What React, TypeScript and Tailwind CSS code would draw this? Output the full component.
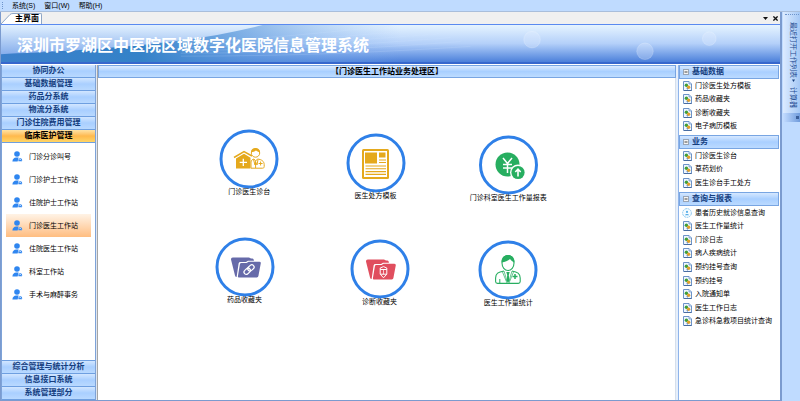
import type { ReactNode } from "react";

const topModules = ["协同办公", "基础数据管理", "药品分系统", "物流分系统", "门诊住院费用管理", "临床医护管理"];
const bottomModules = ["综合管理与统计分析", "信息接口系统", "系统管理部分"];
const stations = ["门诊分诊叫号", "门诊护士工作站", "住院护士工作站", "门诊医生工作站", "住院医生工作站", "科室工作站", "手术与麻醉事务"];

const groups = [
  { title: "基础数据", height: "h-[54px]", items: ["门诊医生处方模板", "药品收藏夹", "诊断收藏夹", "电子病历模板"] },
  { title: "业务", height: "h-[41px]", items: ["门诊医生诊台", "草药划价", "医生诊台手工处方"] },
  {
    title: "查询与报表",
    height: "h-[122px]",
    items: ["患者历史就诊信息查询", "医生工作量统计", "门诊日志", "病人疾病统计", "预约挂号查询", "预约挂号", "入院通知单", "医生工作日志", "急诊科急救项目统计查询"],
  },
];

function PersonIcon() {
  return (
    <svg className="size-[11px] shrink-0" viewBox="0 0 11 11" aria-hidden="true">
      <circle cx="5" cy="3" r="2.8" fill="#2f86f0" />
      <path d="M0.4 10.4C0.5 7.9 2 6.6 4.2 6.4L6.6 6.6 5.6 10.4Z" fill="#2f86f0" />
      <path d="M6.4 10.2C5.9 8.6 7 7 8.4 7.2 9.8 7.3 10.6 8.8 10 10.2Z" fill="#2f86f0" />
      <path d="M7.2 9.2L8.2 8.2 9.3 9.2" stroke="#fff" strokeWidth="0.7" fill="none" />
    </svg>
  );
}

function PageIcon() {
  return (
    <svg className="h-[10px] w-[9px] shrink-0" viewBox="0 0 9 10" aria-hidden="true">
      <path d="M0.5 0.5H6L8.5 3V9.5H0.5Z" fill="#eef6ff" stroke="#6c93c8" />
      <path d="M6 0.5V3H8.5" fill="#c5dbf5" stroke="#6c93c8" strokeWidth="0.7" />
      <circle cx="3.4" cy="4.2" r="1.7" fill="#3f9d3a" />
      <circle cx="5.6" cy="6.3" r="1.7" fill="#e0a02a" />
      <path d="M3.6 7.4L5 8.2" stroke="#3567b5" strokeWidth="0.9" />
      <path d="M1 9.5H8.6" stroke="#44689c" strokeWidth="0.9" />
    </svg>
  );
}

function HistoryIcon() {
  return (
    <svg className="size-[10px] shrink-0" viewBox="0 0 10 10" aria-hidden="true">
      <circle cx="5" cy="5" r="4.4" fill="#f4fbff" stroke="#7cc0ee" strokeWidth="0.8" strokeDasharray="2 0.6" />
      <circle cx="5" cy="3.9" r="1.1" fill="#58aee8" />
      <path d="M3 7.3C3.2 5.6 6.8 5.6 7 7.3Z" fill="#58aee8" />
    </svg>
  );
}

const clinic = (
  <>
    <path d="M15 28.5L25 22.5 33 27" fill="none" stroke="#e5a91d" strokeWidth="1.5" />
    <path d="M17 29.5L25 24.8 31.5 28.8V39.5H17Z" fill="#e5a91d" />
    <path d="M24.3 29.8V37M20.7 33.4H28" stroke="#fff" strokeWidth="1.3" />
    <circle cx="36.5" cy="24" r="4.2" fill="#fff" stroke="#e5a91d" />
    <path d="M32 23.5C31.5 17.5 41.5 17.5 41 23.5 39 23 38 22 37 21.5 35.5 22.5 34 23 32 23.5Z" fill="#e5a91d" />
    <path d="M32 39.2V33C32.3 31 33.5 30.4 35 30L36.6 32 38.5 30C42.5 30.5 45 32 45.2 35.5V37.5C45.2 38.8 44.5 39.2 43.5 39.2Z" fill="#fff" stroke="#e5a91d" />
    <path d="M34.5 30.5L36 36 36.6 33 38 36 39 30.5M36.6 32V39M41.6 32.5V36.5M39.6 34.5H43.6" stroke="#e5a91d" fill="none" />
  </>
);

const newspaper = (
  <>
    <rect x="16" y="16" width="27" height="30" rx="1.5" fill="#e5a91d" />
    <rect x="18" y="18" width="23" height="26" fill="#fff" />
    <rect x="19" y="19.5" width="12" height="11" fill="#e5a91d" />
    <rect x="33" y="19.5" width="6.5" height="5" fill="#e5a91d" />
    <path d="M33 27H40M33 29.5H40M19.5 33H40M19.5 35.8H40M19.5 38.6H40M19.5 41.4H40" stroke="#e5a91d" strokeWidth="1.1" />
  </>
);

const money = (
  <>
    <circle cx="29" cy="29.5" r="12" fill="#27ae60" />
    <path d="M24.5 23L29 28.5 33.5 23M29 28.5V38M24.5 29.5H33.5M24.5 33H33.5" stroke="#fff" strokeWidth="1.5" fill="none" />
    <circle cx="39.5" cy="37.5" r="8" fill="#fff" />
    <circle cx="39.5" cy="37.5" r="6.6" fill="#27ae60" />
    <path d="M39.5 41.5V34.5M36.8 37L39.5 34.2 42.2 37" stroke="#fff" strokeWidth="1.6" fill="none" />
  </>
);

const folderShape = (color: string) => (
  <>
    <path d="M16 22.5Q15.8 20.5 17.8 20.5H34L36 21.5H37.5Q38.6 21.6 38.8 23L39 23.8H33L31 25H25.5Q23.8 25 23.6 26.4L21.6 40Q20.4 40 20 38.5Z" fill={color} />
    <path d="M24.9 27.2Q25.1 26 26.4 26H31.6L33.6 24.8H44.4Q46 24.8 45.8 26.3L43.4 39Q43.2 40.4 41.8 40.4H23.8Q22.8 40.4 22.9 39.2Z" fill={color} />
  </>
);

const linkFolder = (
  <>
    {folderShape("#666aa9")}
    <g transform="rotate(-42 34 32.5)" fill="none" stroke="#fff" strokeWidth="1.2">
      <rect x="28" y="30.3" width="7" height="4.6" rx="2.3" />
      <rect x="33" y="30.3" width="7" height="4.6" rx="2.3" />
    </g>
  </>
);

const penFolder = (
  <>
    {folderShape("#e04e5e")}
    <path d="M30.2 29L33.5 27.6 36.8 29V35.2L33.5 38.8 30.2 35.2ZM30.2 30.5H36.8M30.5 35.2H36.5" fill="none" stroke="#fff" />
    <path d="M33.5 30.5V35" stroke="#fff" strokeWidth="0.7" />
  </>
);

const doctor = (
  <>
    <ellipse cx="30" cy="23" rx="6" ry="7.5" fill="#fff" stroke="#27ae60" strokeWidth="1.1" />
    <path d="M23.6 22.5C22.5 12.5 37.5 12.5 36.4 22.5 34.5 21.5 33 20.5 32 19 30 21 27 22 23.6 22.5Z" fill="#27ae60" />
    <path d="M26 31C20 32 17.8 33.5 17.6 38V41.5Q17.6 43.4 19.5 43.4H40.3Q42.2 43.4 42.2 41.5V38C42 33.5 39.5 32 34 31" fill="none" stroke="#27ae60" strokeWidth="1.1" />
    <path d="M26 31L29 41 30 36 31 41 34 31M24.5 32L29 43M35.5 32L31 43" fill="none" stroke="#27ae60" strokeWidth="0.7" />
    <path d="M28.3 32H31.7L30.8 35 31.2 41 30 43 28.8 41 29.2 35Z" fill="#27ae60" />
    <path d="M37 34V39M34.5 36.5H39.5" stroke="#27ae60" strokeWidth="1.5" />
    <path d="M21.8 39V43" stroke="#27ae60" />
  </>
);

const shortcuts: { label: string; left: number; top: number; art: ReactNode }[] = [
  { label: "门诊医生诊台", left: 26.2, top: 51, art: clinic },
  { label: "医生处方模板", left: 48.1, top: 55, art: newspaper },
  { label: "门诊科室医生工作量报表", left: 71.1, top: 57, art: money },
  { label: "药品收藏夹", left: 25.4, top: 159, art: linkFolder },
  { label: "诊断收藏夹", left: 48.8, top: 161, art: penFolder },
  { label: "医生工作量统计", left: 71.1, top: 162, art: doctor },
];

function ModuleButton({ label, active = false }: { label: string; active?: boolean }) {
  const tone = active
    ? "from-[#ffe3a4] via-[#ffb94c] to-[#ffd566] text-black"
    : "from-[#d2e6ff] via-[#a9cfff] to-[#b9d9ff] text-[#153e7e]";
  return (
    <button className={`block h-[13px] w-full border-b border-[#6e9fe0] bg-linear-to-b text-center text-[8px] leading-[12px] font-bold ${tone}`}>
      {label}
    </button>
  );
}

function Banner() {
  return (
    <header className="relative h-[40px] overflow-hidden border-t border-b-2 border-t-[#5a8af0] border-b-[#3767cd] bg-linear-to-b from-[#e6f4ff] via-[#b4d0f9] to-[#4c80da]">
      <svg className="absolute inset-0 h-full w-full" viewBox="0 0 780 38" preserveAspectRatio="none" aria-hidden="true">
        <defs>
          <linearGradient id="wave" x1="0" x2="1" y1="0" y2="0">
            <stop offset="0" stopColor="#3b80cb" />
            <stop offset="0.35" stopColor="#3482c8" />
            <stop offset="0.62" stopColor="#5b98dc" stopOpacity="0.65" />
            <stop offset="1" stopColor="#86b4ef" stopOpacity="0" />
          </linearGradient>
          <linearGradient id="sky" x1="0" x2="0" y1="0" y2="1">
            <stop offset="0" stopColor="#e2f1ff" />
            <stop offset="1" stopColor="#86aeec" />
          </linearGradient>
        </defs>
        <path d="M0 0H262C210 14 150 20 90 25 50 28 20 29 0 30Z" fill="url(#sky)" />
        <path d="M262 0C210 14 150 20 90 25 50 28 20 29 0 30V38H400V0Z" fill="url(#wave)" />
        <g fill="none" stroke="#d5e8ff" strokeOpacity="0.28" strokeWidth="0.6">
          <path d="M180 17C240 17 320 8 390 1" />
          <path d="M180 20C250 20 340 12 420 5" />
          <path d="M180 23C260 23 350 16 440 9" />
          <path d="M180 26C270 26 360 20 450 13" />
          <path d="M180 29C280 29 370 24 460 17" />
          <path d="M180 32C290 32 380 28 470 22" />
        </g>
      </svg>
      <svg className="absolute inset-y-0 right-0 h-full w-[270px]" viewBox="0 0 270 38" aria-hidden="true">
        <g fill="#e4f0ff" fillOpacity="0.3" stroke="#fff" strokeOpacity="0.2">
          <circle cx="19" cy="15" r="8.5" />
          <circle cx="135" cy="27" r="8.5" />
          <circle cx="201" cy="14" r="7" />
        </g>
      </svg>
      <h1 className="relative pl-[16px] text-[16px] leading-[42px] font-bold whitespace-nowrap text-white">
        深圳市罗湖区中医院区域数字化医院信息管理系统
      </h1>
    </header>
  );
}

export default function App() {
  return (
    <div className="flex min-h-screen flex-col bg-[#bfdbff] font-['Liberation_Sans','Noto_Sans_CJK_SC',sans-serif] text-[7px] leading-[8px] text-black">
      <nav className="flex h-[12px] items-center gap-[9px] border-b border-[#a9bedb] pl-[2px]">
        <span className="h-[7px] border-l border-dotted border-[#6d94cc]" />
        <button>系统(S)</button>
        <button>窗口(W)</button>
        <button>帮助(H)</button>
      </nav>

      <div className="flex flex-1">
        <div className="flex min-w-0 flex-1 flex-col border-r-2 border-b border-l border-[#7b9bcf]">
          <div className="flex h-[12px] items-end justify-between bg-[#f0f0f0] pr-[2px]">
            <div className="flex items-end">
              <svg className="h-[11px] w-[12px]" viewBox="0 0 12 11" aria-hidden="true">
                <path d="M0 11L9 1.5Q10 0.5 12 0.5V11Z" fill="#fff" />
                <path d="M0 11L9 1.5Q10 0.5 12 0.5" fill="none" stroke="#8ea6c6" />
              </svg>
              <button className="h-[11px] rounded-tr-xs border-t border-r border-[#8ea6c6] bg-white px-[2px] text-[8px] leading-[10px] font-bold">
                主界面
              </button>
            </div>
            <div className="flex h-full items-center gap-[5px]">
              <button aria-label="列表">
                <svg className="h-[3px] w-[5px]" viewBox="0 0 5 3" aria-hidden="true">
                  <path d="M0 0H5L2.5 3Z" fill="#111" />
                </svg>
              </button>
              <button aria-label="关闭">
                <svg className="size-[5px]" viewBox="0 0 5 5" aria-hidden="true">
                  <path d="M0.4 0.4L4.6 4.6M4.6 0.4L0.4 4.6" stroke="#111" strokeWidth="1.3" />
                </svg>
              </button>
            </div>
          </div>

          <Banner />

          <div className="flex flex-1 bg-white pt-px">
            <aside className="flex w-[95px] shrink-0 flex-col border-x border-[#7ea3d8]">
              <div>
                {topModules.map((m, i) => (
                  <ModuleButton key={m} label={m} active={i === topModules.length - 1} />
                ))}
              </div>
              <ul className="flex-1 px-[4px] pt-[2px]">
                {stations.map((s) => (
                  <li key={s}>
                    <button
                      className={`flex h-[23px] w-full items-center gap-[6px] pl-[6px] ${
                        s === "门诊医生工作站" ? "bg-linear-to-b from-[#fff3e6] to-[#ffbd80]" : ""
                      }`}
                    >
                      <PersonIcon />
                      {s}
                    </button>
                  </li>
                ))}
              </ul>
              <div className="border-t border-[#6e9fe0]">
                {bottomModules.map((m) => (
                  <ModuleButton key={m} label={m} />
                ))}
              </div>
            </aside>

            <div className="w-[2px] shrink-0 border-r border-[#a5a5a5] bg-[#dfe6f0]" />

            <main className="flex min-w-0 flex-1 flex-col">
              <h2 className="h-[13px] border border-[#78a5e2] bg-linear-to-b from-[#dcebff] via-[#a8cfff] to-[#bddcff] text-center text-[8px] leading-[12px] font-bold">
                【门诊医生工作站业务处理区】
              </h2>
              <div className="relative flex-1 border-r border-[#d5dfec]">
                {shortcuts.map((s) => (
                  <button
                    key={s.label}
                    className="absolute flex -translate-x-1/2 flex-col items-center whitespace-nowrap"
                    style={{ left: `${s.left}%`, top: s.top }}
                  >
                    <svg className="size-[60px]" viewBox="0 0 60 60" aria-hidden="true">
                      <circle cx="30" cy="30" r="28" fill="#fff" stroke="#2f80e8" strokeWidth="3" />
                      {s.art}
                    </svg>
                    <span className="-mt-px">{s.label}</span>
                  </button>
                ))}
              </div>
            </main>

            <div className="w-[3px] shrink-0 border-r border-[#8fb4ea] bg-[#e6effb]" />

            <aside className="flex w-[101px] shrink-0 flex-col gap-[2px] pr-px">
              {groups.map((g) => (
                <section key={g.title}>
                  <h3 className="flex h-[14px] items-center gap-[3px] border border-[#78a5e2] bg-linear-to-b from-[#d6e8ff] via-[#a9cfff] to-[#bbdaff] pl-[3px] text-[8px] font-bold text-[#153e7e]">
                    <svg className="size-[6px]" viewBox="0 0 6 6" aria-hidden="true">
                      <rect x="0.5" y="0.5" width="5" height="5" fill="#f4f4f4" stroke="#9aa5b5" />
                      <path d="M1.5 3H4.5" stroke="#444" />
                    </svg>
                    {g.title}
                  </h3>
                  <ul className={`grid auto-rows-fr ${g.height}`}>
                    {g.items.map((item) => (
                      <li key={item} className="flex items-center pl-[3px]">
                        <a href="#" className="flex items-center gap-[3px] whitespace-nowrap">
                          <span className="flex w-[10px] justify-center">
                            {item === "患者历史就诊信息查询" ? <HistoryIcon /> : <PageIcon />}
                          </span>
                          {item}
                        </a>
                      </li>
                    ))}
                  </ul>
                </section>
              ))}
            </aside>
          </div>
        </div>

        <div className="flex w-[18px] shrink-0 flex-col pl-px">
          <div className="flex h-[110px] flex-col items-center bg-linear-to-r from-[#dcebff] to-[#a5c8f5] pt-[2px] text-[#1d4a91]">
            <span className="w-[14px] border-t border-dotted border-[#6d94cc]" />
            <div className="flex flex-1 items-center gap-[5px] pt-[7px] pl-[3px] [text-orientation:sideways] [writing-mode:vertical-rl]">
              <button className="flex items-center gap-px">
                最近打开工作列表
                <svg className="size-[3px]" viewBox="0 0 3 3" aria-hidden="true">
                  <path d="M0 0.5H3L1.5 3Z" fill="#153e7e" />
                </svg>
              </button>
              <button>计算器</button>
            </div>
            <div className="flex h-[9px] w-full items-center justify-end bg-linear-to-r from-[#c3dcff] to-[#6f9bdc] pr-px">
              <span className="size-[3px] bg-[#3a5f9a]" />
            </div>
          </div>
        </div>
      </div>
    </div>
  );
}
